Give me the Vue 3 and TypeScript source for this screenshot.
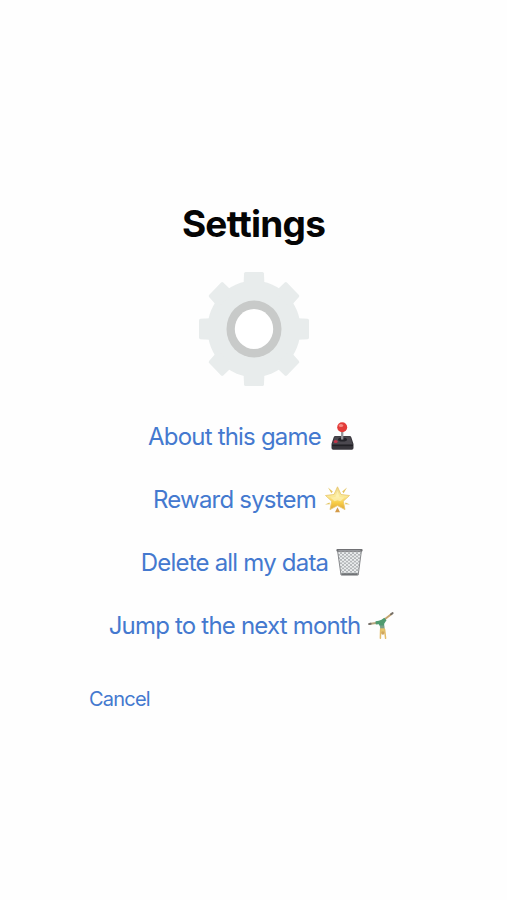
<script setup lang="ts">
interface MenuItem {
  id: string
  label: string
}

const items: MenuItem[] = [
  { id: 'about', label: 'About this game' },
  { id: 'reward', label: 'Reward system' },
  { id: 'delete', label: 'Delete all my data' },
  { id: 'jump', label: 'Jump to the next month' },
]

const teeth: number[] = [0, 45, 90, 135, 180, 225, 270, 315]
</script>

<template>
  <main class="settings">
    <h1 class="title">Settings</h1>

    <svg class="gear" viewBox="-55 -55 110 110" preserveAspectRatio="none">
      <g fill="#e8ecec">
        <circle r="46.5" />
        <path
          v-for="angle in teeth"
          :key="angle"
          d="M-10.5-40 L-10-53.5 Q-9.8-55-8.5-55 H8.5 Q9.8-55 10-53.5 L10.5-40Z"
          :transform="`rotate(${angle})`"
        />
      </g>
      <circle r="27.5" fill="#c8cac9" />
      <circle r="19.2" fill="#fff" />
    </svg>

    <nav class="menu">
      <button v-for="item in items" :key="item.id" :class="['item', item.id]" type="button">
        <span class="label">{{ item.label }}</span>

        <svg v-if="item.id === 'about'" class="icon" viewBox="0 0 30 30">
          <path d="M7 14h15q1 0 1.4 1.5L25.5 22v4q0 1.7-1.7 1.7H5.2Q3.5 27.7 3.5 26v-4l2.1-6.5Q6 14 7 14Z" fill="#38363c" />
          <path d="M7 14.5h15l2.4 7.5H4.6Z" fill="#4b484f" />
          <path d="M4 23.5h21" stroke="#222126" stroke-width="1.3" />
          <ellipse cx="14.5" cy="17.5" rx="4.5" ry="2" fill="#25242a" />
          <path d="M14.2 9v8.5" stroke="#96969b" stroke-width="2.3" />
          <circle cx="14.2" cy="5.2" r="5" fill="#e33c39" />
          <ellipse cx="13" cy="3.5" rx="2.2" ry="1.5" fill="#f58b83" />
          <ellipse cx="7.7" cy="19.5" rx="2" ry="1.5" fill="#c23448" />
        </svg>

        <svg v-else-if="item.id === 'reward'" class="icon" viewBox="0 0 30 30">
          <defs>
            <linearGradient id="star-fill" x1="0" y1="0" x2="0" y2="1">
              <stop offset="0" stop-color="#ead58b" />
              <stop offset=".4" stop-color="#fbeb9b" />
              <stop offset=".7" stop-color="#f8cd45" />
              <stop offset="1" stop-color="#dea63c" />
            </linearGradient>
          </defs>
          <path d="M14.5 1.8 18 9.5 26.5 10.5 20.3 16.2 22 24.6 14.5 20.6 7 24.6 8.7 16.2 2.5 10.5 11 9.5Z" fill="url(#star-fill)" stroke="#e9c568" stroke-width=".8" stroke-linejoin="round" />
          <path d="m14.5 6 2 6 5 .6-4 3.6-3-1-3 1-4-3.6 5-.6Z" fill="#fff4bb" opacity=".65" />
          <g fill="#e3c45f">
            <path d="m5 2.4 4.8 4.1L8.4 8.3Z" />
            <path d="m24 2.4-4.8 4.1 1.4 1.8Z" />
            <path d="m2 19.4 4.5-2 .4 1.8Z" />
            <path d="m27 19.4-4.5-2-.4 1.8Z" />
          </g>
          <path d="m14.5 22.3 2.5 4.9h-5Z" fill="#d49b49" />
        </svg>

        <svg v-else-if="item.id === 'delete'" class="icon" viewBox="0 0 30 30">
          <defs>
            <pattern id="mesh" width="4" height="3.4" patternUnits="userSpaceOnUse">
              <path d="M0 0 4 3.4M4 0 0 3.4" stroke="#a4a7aa" stroke-width=".75" />
            </pattern>
          </defs>
          <path d="M2.6 3h23.8L23.2 27H6Z" fill="#eceeef" />
          <path d="M2.6 3h23.8L23.2 27H6Z" fill="url(#mesh)" stroke="#898b8e" stroke-width="1" />
          <path d="M6.5 26.2h16" stroke="#707376" stroke-width="2" />
          <rect x="1.4" y="1" width="26.2" height="2.4" rx="1" fill="#707174" />
          <path d="M3.4 2.6h22" stroke="#a8aaad" stroke-width=".8" />
        </svg>

        <svg v-else class="icon" viewBox="0 0 30 30" fill="none" stroke-linecap="round" stroke-linejoin="round">
          <path d="M14 11.5 9 12 3.5 12.8" stroke="#b6a57e" stroke-width="2" />
          <path d="m16 9.5 4-3L24.5 3" stroke="#c5a56f" stroke-width="2" />
          <path d="m2.2 13 1.4-.2M24 3.2l1.6-1.1" stroke="#767069" stroke-width="2" />
          <path d="M8.5 10.3Q12 10 14.5 8.8l2.8-2 2.2 2.4-2.2 3.2-.3 3H13l-1.2-2.2-3 .2Z" fill="#4f9b70" />
          <path d="M13 14.5h4.4l.3 3.8H13.2Z" fill="#7ba088" />
          <path d="M13.2 17.3h4.6v4.4h-4.6Z" fill="#e4c66d" />
          <path d="m13.6 18.5-.2 8.8M17.6 18.5l1 8.8" stroke="#e3bc68" stroke-width="1.5" />
          <circle cx="15.8" cy="22" r="1.7" fill="#d0a65e" />
        </svg>
      </button>
    </nav>

    <button class="cancel" type="button">Cancel</button>
  </main>
</template>

<style>
body {
  background: #fefefe;
}
</style>

<style scoped>
.settings {
  box-sizing: border-box;
  width: 507px;
  height: 900px;
  padding-top: 200px;
  display: flex;
  flex-direction: column;
  align-items: center;
  background: #fefefe;
  font-family: Inter, "Liberation Sans", sans-serif;
}
.title {
  margin: 0;
  height: 48px;
  line-height: 48px;
  font-size: 37px;
  font-weight: 700;
  letter-spacing: -0.75px;
  color: #050505;
}
.gear {
  width: 110px;
  height: 114px;
  margin-top: 24px;
}
.menu {
  display: flex;
  flex-direction: column;
  align-items: center;
  gap: 27px;
  margin-top: 33px;
  padding-right: 1px;
}
button {
  padding: 0;
  border: 0;
  background: none;
  font-family: inherit;
  color: #4479cf;
  white-space: nowrap;
}
.item {
  height: 36px;
  display: flex;
  align-items: center;
  gap: 7px;
  font-size: 24px;
  line-height: 36px;
  letter-spacing: -0.8px;
}
.icon {
  width: 30px;
  height: 30px;
}
.cancel {
  align-self: flex-start;
  margin: 40px 0 0 89px;
  height: 30px;
  font-size: 20px;
  line-height: 30px;
  letter-spacing: -0.8px;
}
</style>
